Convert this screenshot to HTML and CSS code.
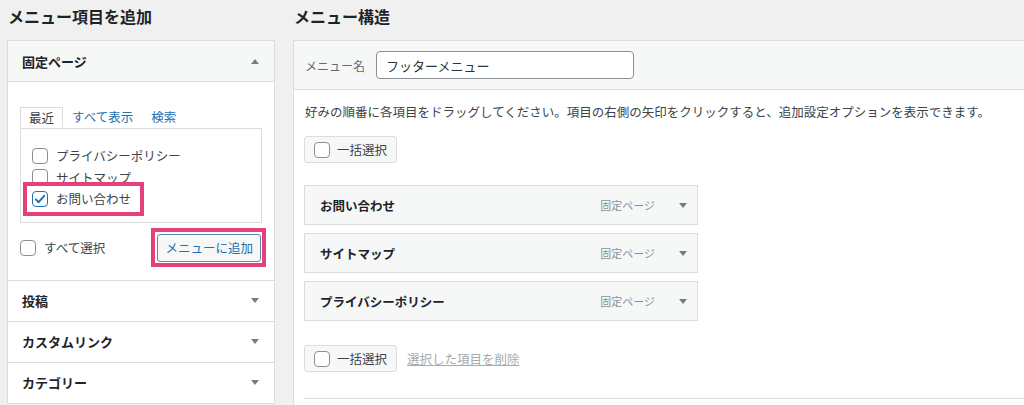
FILE: index.html
```html
<!DOCTYPE html>
<html lang="ja">
<head>
<meta charset="utf-8">
<title>メニュー</title>
<link rel="stylesheet" href="styles.css">
</head>
<body>
<div class="page">
  <section class="col-left">
    <h2 class="page-title">メニュー項目を追加</h2>
    <div class="accordion">
      <div class="acc-section open">
        <div class="acc-title"><span>固定ページ</span><span class="arrow arrow-up"></span></div>
        <div class="acc-body">
          <div class="tabs">
            <span class="tab active">最近</span>
            <span class="tab">すべて表示</span>
            <span class="tab">検索</span>
          </div>
          <div class="tab-panel">
            <label class="check-row"><span class="cb"></span>プライバシーポリシー</label>
            <label class="check-row"><span class="cb"></span>サイトマップ</label>
            <label class="check-row highlight"><span class="cb checked"><svg width="14" height="14" viewBox="0 0 14 14"><path d="M2.8 7.4 L5.6 10.2 L11.2 3.8" fill="none" stroke="#2271b1" stroke-width="2" stroke-linecap="round" stroke-linejoin="round"/></svg></span>お問い合わせ</label>
          </div>
          <div class="acc-actions">
            <label class="check-row"><span class="cb"></span>すべて選択</label>
            <button class="btn-add" type="button">メニューに追加</button>
          </div>
        </div>
      </div>
      <div class="acc-section">
        <div class="acc-title"><span>投稿</span><span class="arrow arrow-down"></span></div>
      </div>
      <div class="acc-section">
        <div class="acc-title"><span>カスタムリンク</span><span class="arrow arrow-down"></span></div>
      </div>
      <div class="acc-section">
        <div class="acc-title"><span>カテゴリー</span><span class="arrow arrow-down"></span></div>
      </div>
    </div>
  </section>

  <section class="col-right">
    <h2 class="page-title">メニュー構造</h2>
    <div class="menu-panel">
      <div class="menu-header">
        <span class="menu-name-label">メニュー名</span>
        <input class="menu-name-input" type="text" value="フッターメニュー">
      </div>
      <div class="menu-body">
        <p class="menu-desc">好みの順番に各項目をドラッグしてください。項目の右側の矢印をクリックすると、追加設定オプションを表示できます。</p>
        <label class="bulk-btn"><span class="cb"></span>一括選択</label>
        <ul class="menu-items">
          <li class="menu-item"><span class="item-title">お問い合わせ</span><span class="item-type">固定ページ</span><span class="arrow arrow-down"></span></li>
          <li class="menu-item"><span class="item-title">サイトマップ</span><span class="item-type">固定ページ</span><span class="arrow arrow-down"></span></li>
          <li class="menu-item"><span class="item-title">プライバシーポリシー</span><span class="item-type">固定ページ</span><span class="arrow arrow-down"></span></li>
        </ul>
        <div class="menu-footer">
          <label class="bulk-btn"><span class="cb"></span>一括選択</label>
          <a class="delete-link" href="#">選択した項目を削除</a>
        </div>
        <div class="menu-divider"></div>
      </div>
    </div>
  </section>
</div>
</body>
</html>
```
FILE: styles.css
```css
html, body {
  margin: 0;
  height: 405px;
  overflow: hidden;
}
body {
  background: #f0f0f1;
  font-family: "Noto Sans CJK JP", "Noto Sans", sans-serif;
  font-size: 12.5px;
  color: #3c434a;
}
.page {
  display: flex;
  gap: 18px;
  padding-left: 7px;
}
.col-left {
  width: 268px;
  flex: none;
}
.col-right {
  flex: 1;
  min-width: 0;
}
.page-title {
  margin: 0;
  height: 40px;
  line-height: 32px;
  font-size: 16px;
  font-weight: 700;
  color: #1d2327;
  padding-left: 1px;
}

/* left accordion */
.accordion {
  background: #fff;
  border: 1px solid #dcdcde;
}
.acc-title {
  height: 40px;
  display: flex;
  align-items: center;
  justify-content: space-between;
  padding: 0 15px 0 14px;
  font-size: 13px;
  font-weight: 700;
  color: #1d2327;
  border-top: 1px solid #dcdcde;
}
.acc-section.open .acc-title {
  border-top: none;
  background: #f6f7f7;
  border-bottom: 1px solid #dcdcde;
}
.arrow {
  width: 0;
  height: 0;
  border-left: 4px solid transparent;
  border-right: 4px solid transparent;
}
.arrow-up { border-bottom: 5px solid #787c82; }
.arrow-down { border-top: 5px solid #787c82; }

.acc-body {
  padding: 25px 12px 18px;
}
.tabs {
  display: flex;
  height: 21px;
}
.tab {
  padding: 0 9px;
  line-height: 20px;
  color: #2271b1;
}
.tab.active {
  position: relative;
  z-index: 1;
  padding: 0 8px;
  border: 1px solid #dcdcde;
  border-bottom-color: #fff;
  background: #fff;
  color: #3c434a;
}
.tab-panel {
  border: 1px solid #dcdcde;
  padding: 16px 11px 12px;
  display: flex;
  flex-direction: column;
}
.check-row {
  display: flex;
  align-items: center;
  gap: 8px;
  height: 21.5px;
  color: #3c434a;
}
.cb {
  width: 16px;
  height: 16px;
  box-sizing: border-box;
  border: 1px solid #8c8f94;
  border-radius: 4px;
  background: #fff;
  flex: none;
  display: flex;
  align-items: center;
  justify-content: center;
}
.cb.checked {
  border-color: #2271b1;
}
.highlight {
  position: relative;
}
.highlight::after {
  content: "";
  position: absolute;
  left: -9px;
  top: -6px;
  width: 121px;
  height: 34px;
  box-sizing: border-box;
  border: 4px solid #e6407b;
}
.acc-actions {
  display: flex;
  justify-content: space-between;
  align-items: center;
  margin-top: 11px;
}
.btn-add {
  position: relative;
  height: 28px;
  padding: 0 7px;
  font-family: inherit;
  font-size: 12.5px;
  color: #2271b1;
  background: #f6f7f7;
  border: 1px solid #5f87ad;
  border-radius: 3px;
  margin-right: 1px;
}
.btn-add::after {
  content: "";
  position: absolute;
  top: -7px;
  left: -7px;
  right: -6px;
  bottom: -6px;
  border: 4px solid #e6407b;
}

/* right panel */
.menu-panel {
  background: #fff;
  border-left: 1px solid #dcdcde;
  border-top: 1px solid #dcdcde;
  height: 364px;
}
.menu-header {
  height: 48px;
  background: #f6f7f7;
  border-bottom: 1px solid #dcdcde;
  display: flex;
  align-items: center;
  gap: 11px;
  padding-left: 11px;
}
.menu-name-label {
  color: #646970;
  font-size: 12px;
}
.menu-name-input {
  width: 258px;
  height: 28px;
  box-sizing: border-box;
  border: 1px solid #8c8f94;
  border-radius: 4px;
  padding: 0 9px;
  font-family: inherit;
  font-size: 13px;
  color: #2c3338;
  background: #fff;
}
.menu-body {
  padding: 13px 0 0 10px;
}
.menu-desc {
  margin: 0 0 15px 1px;
  line-height: 18px;
}
.bulk-btn {
  display: flex;
  width: fit-content;
  align-items: center;
  gap: 7px;
  height: 27px;
  box-sizing: border-box;
  padding: 0 9px;
  background: #f6f7f7;
  border: 1px solid #dcdcde;
  border-radius: 3px;
  color: #3c434a;
}
.menu-items {
  list-style: none;
  margin: 22px 0 0;
  padding: 0;
  width: 394px;
  display: flex;
  flex-direction: column;
  gap: 8px;
}
.menu-item {
  height: 40px;
  box-sizing: border-box;
  border: 1px solid #dcdcde;
  background: #f6f7f7;
  display: flex;
  align-items: center;
  padding: 0 10px 0 15px;
}
.item-title {
  flex: 1;
  font-weight: 700;
  color: #1d2327;
}
.item-type {
  font-size: 11px;
  color: #8c8f94;
  margin-right: 24px;
}
.menu-footer {
  margin-top: 24px;
  display: flex;
  align-items: center;
  gap: 10px;
}
.delete-link {
  color: #a7aaad;
  text-decoration: underline;
}
.menu-divider {
  margin-top: 26px;
  border-top: 1px solid #dcdcde;
}
```
